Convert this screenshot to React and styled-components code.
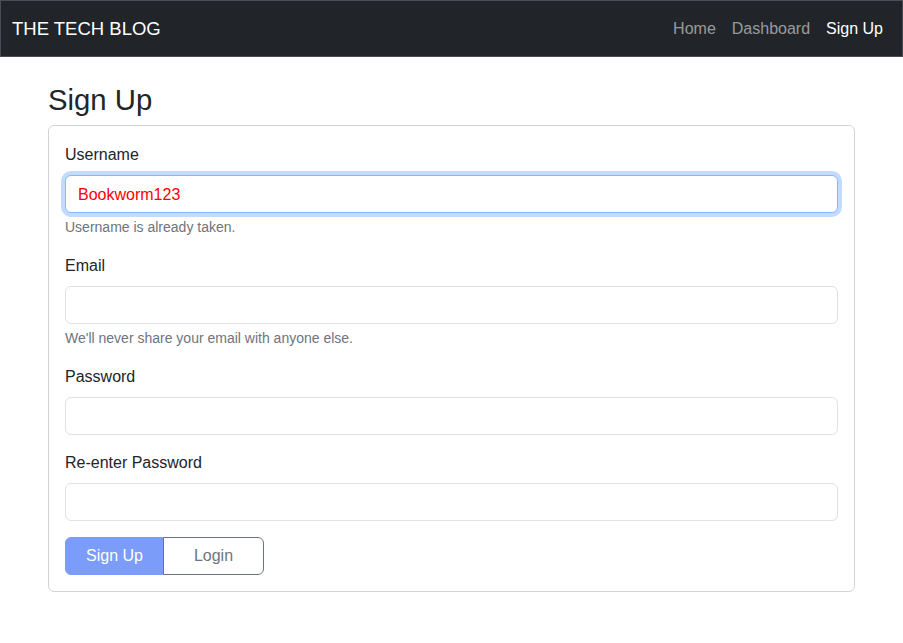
import React, { useEffect, useRef } from 'react';
import styled, { createGlobalStyle, css } from 'styled-components';

const GlobalStyle = createGlobalStyle`
    * {
        box-sizing: border-box;
    }

    body {
        margin: 0;
        background: #fff;
        color: #212529;
        font-family: "Liberation Sans", Arial, sans-serif;
        font-size: 16px;
        line-height: 1.5;
    }
`;

const Navbar = styled.nav`
    display: flex;
    align-items: center;
    justify-content: space-between;
    height: 57px;
    padding: 0 11px;
    background: #212529;
    border: 1px solid #4a4e54;
`;

const Brand = styled.a`
    color: #fff;
    font-size: 18.5px;
    line-height: 30px;
    text-decoration: none;
`;

const NavLinks = styled.div`
    display: flex;
    align-items: center;
`;

const NavLink = styled.a`
    padding: 8px;
    color: ${(p) => (p.$active ? '#fff' : 'rgba(255, 255, 255, 0.55)')};
    text-decoration: none;
`;

const Main = styled.main`
    padding: 0 48px;
`;

const Title = styled.h2`
    margin: 25px 0 8px;
    font-size: 29.3px;
    font-weight: 500;
    line-height: 1.2;
`;

const Card = styled.form`
    border: 1px solid rgba(0, 0, 0, 0.175);
    border-radius: 6px;
    padding: 17px 16px 16px;
`;

const Field = styled.div`
    margin-bottom: 16px;
`;

const Label = styled.label`
    display: block;
    margin-bottom: 8px;
`;

const Input = styled.input`
    display: block;
    width: 100%;
    height: 38px;
    padding: 7px 12px 5px;
    font-family: inherit;
    font-size: 16px;
    color: ${(p) => p.$color || '#212529'};
    background: #fff;
    border: 1px solid #dee2e6;
    border-radius: 6px;
    outline: none;
    caret-color: #212529;

    ${(p) =>
        p.$focused &&
        css`
            border-color: #86b7fe;
            box-shadow: 0 0 0 4px rgba(13, 110, 253, 0.25);
        `}
`;

const Help = styled.div`
    margin-top: 4px;
    font-size: 14px;
    color: #6c757d;
`;

const ButtonGroup = styled.div`
    display: inline-flex;
`;

const Button = styled.button`
    width: ${(p) => p.$width};
    height: 38px;
    font-family: inherit;
    font-size: 16px;
    cursor: pointer;
    border: 1px solid ${(p) => (p.$primary ? '#7b9cf9' : '#6c757d')};
    background: ${(p) => (p.$primary ? '#7b9cf9' : '#fff')};
    color: ${(p) => (p.$primary ? '#fff' : '#6c757d')};
    border-radius: ${(p) => (p.$primary ? '6px 0 0 6px' : '0 6px 6px 0')};
    margin-left: ${(p) => (p.$primary ? '0' : '-1px')};
`;

function FormField({ label, help, inputRef, focused, color, defaultValue, type = 'text' }) {
    return (
        <Field>
            <Label>{label}</Label>
            <Input
                ref={inputRef}
                type={type}
                defaultValue={defaultValue}
                $focused={focused}
                $color={color}
            />
            {help && <Help>{help}</Help>}
        </Field>
    );
}

export default function App() {
    const usernameRef = useRef(null);

    useEffect(() => {
        const el = usernameRef.current;
        if (el) {
            el.focus();
            el.setSelectionRange(el.value.length, el.value.length);
        }
    }, []);

    return (
        <>
            <GlobalStyle />
            <Navbar>
                <Brand href="#">THE TECH BLOG</Brand>
                <NavLinks>
                    <NavLink href="#">Home</NavLink>
                    <NavLink href="#">Dashboard</NavLink>
                    <NavLink href="#" $active>Sign Up</NavLink>
                </NavLinks>
            </Navbar>
            <Main>
                <Title>Sign Up</Title>
                <Card onSubmit={(e) => e.preventDefault()}>
                    <FormField
                        label="Username"
                        help="Username is already taken."
                        inputRef={usernameRef}
                        defaultValue="Bookworm123"
                        color="#ff0000"
                        focused
                    />
                    <FormField
                        label="Email"
                        type="email"
                        help="We'll never share your email with anyone else."
                    />
                    <FormField label="Password" type="password" />
                    <FormField label="Re-enter Password" type="password" />
                    <ButtonGroup>
                        <Button type="submit" $primary $width="99px">Sign Up</Button>
                        <Button type="button" $width="101px">Login</Button>
                    </ButtonGroup>
                </Card>
            </Main>
        </>
    );
}
